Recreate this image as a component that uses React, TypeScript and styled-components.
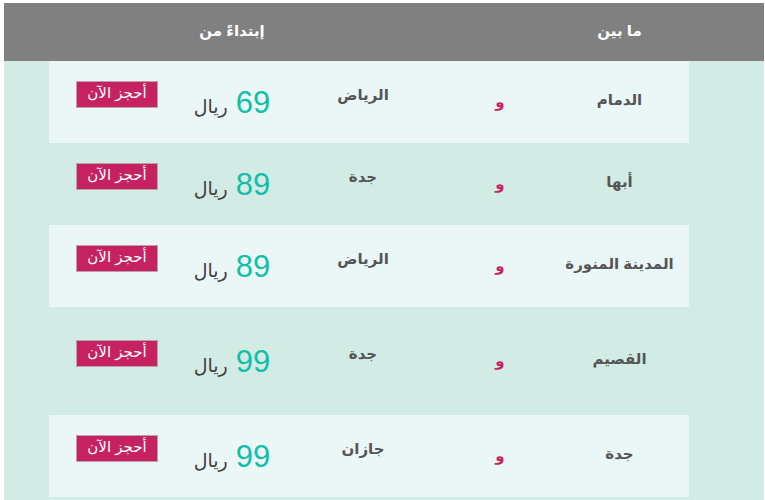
import React from 'react';
import styled, { createGlobalStyle } from 'styled-components';

const GlobalStyle = createGlobalStyle`
    html, body {
        margin: 0;
        padding: 0;
        background: #ffffff;
    }
    body {
        font-family: 'Liberation Sans', 'DejaVu Sans', sans-serif;
    }
`;

type Route = {
    from: string;
    to: string;
    price: number;
    light: boolean;
    tall?: boolean;
};

const routes: Route[] = [
    { from: 'الدمام', to: 'الرياض', price: 69, light: true },
    { from: 'أبها', to: 'جدة', price: 89, light: false },
    { from: 'المدينة المنورة', to: 'الرياض', price: 89, light: true },
    { from: 'القصيم', to: 'جدة', price: 99, light: false, tall: true },
    { from: 'جدة', to: 'جازان', price: 99, light: true },
];

const columns = '139px 100px 174px 88px 139px';

const App = () => {
    return (
        <>
            <GlobalStyle />
            <Page>
                <Table dir="rtl">
                    <Header>
                        <HeadCell>ما بين</HeadCell>
                        <span />
                        <span />
                        <HeadCell>إبتداءً من</HeadCell>
                        <span />
                    </Header>
                    <Body>
                        {routes.map((r, i) => (
                            <Row key={i} $light={r.light} $tall={r.tall}>
                                <City>{r.from}</City>
                                <And>و</And>
                                <Dest>{r.to}</Dest>
                                <Price>
                                    <Amount>{r.price}</Amount>
                                    <Currency>ريال</Currency>
                                </Price>
                                <BookCell>
                                    <BookButton>أحجز الآن</BookButton>
                                </BookCell>
                            </Row>
                        ))}
                    </Body>
                </Table>
            </Page>
        </>
    );
};

const Page = styled.div`
    padding: 3px 1px 0 4px;
    width: 760px;
`;

const Table = styled.div`
    width: 760px;
    background: #d3ebe5;
    padding-bottom: 3px;
`;

const Header = styled.div`
    display: grid;
    grid-template-columns: ${columns};
    align-items: center;
    height: 58px;
    background: #808080;
    padding: 0 75px 0 45px;
`;

const HeadCell = styled.div`
    color: #ffffff;
    font-weight: bold;
    font-size: 15px;
    text-align: center;
    margin-bottom: 2px;
`;

const Body = styled.div`
    display: flex;
    flex-direction: column;
    margin: 0 75px 0 45px;
`;

const Row = styled.div<{ $light: boolean; $tall?: boolean }>`
    display: grid;
    grid-template-columns: ${columns};
    align-items: center;
    height: ${(p) => (p.$tall ? 108 : 82)}px;
    background: ${(p) => (p.$light ? '#ebf6f7' : 'transparent')};
`;

const City = styled.div`
    color: #555555;
    font-weight: bold;
    font-size: 15px;
    text-align: center;
    margin-bottom: 4px;
`;

const And = styled.div`
    color: #c8215f;
    font-weight: bold;
    font-size: 15px;
    text-align: center;
`;

const Dest = styled.div`
    color: #555555;
    font-weight: bold;
    font-size: 15px;
    text-align: center;
    margin-bottom: 14px;
`;

const Price = styled.div`
    display: flex;
    justify-content: center;
    align-items: baseline;
    gap: 8px;
    margin-top: 2px;
`;

const Amount = styled.span`
    color: #10bfa8;
    font-size: 31px;
    font-family: 'Liberation Sans', sans-serif;
`;

const Currency = styled.span`
    color: #404040;
    font-size: 19px;
`;

const BookCell = styled.div`
    display: flex;
    justify-content: center;
    margin-bottom: 16px;
    padding-right: 3px;
`;

const BookButton = styled.button`
    width: 82px;
    height: 27px;
    padding: 0 0 3px;
    background: #c62262;
    border: 1px solid #b9a0ab;
    color: #ffffff;
    font-family: 'Liberation Sans', 'DejaVu Sans', sans-serif;
    font-size: 15px;
    cursor: pointer;
`;

export default App;
